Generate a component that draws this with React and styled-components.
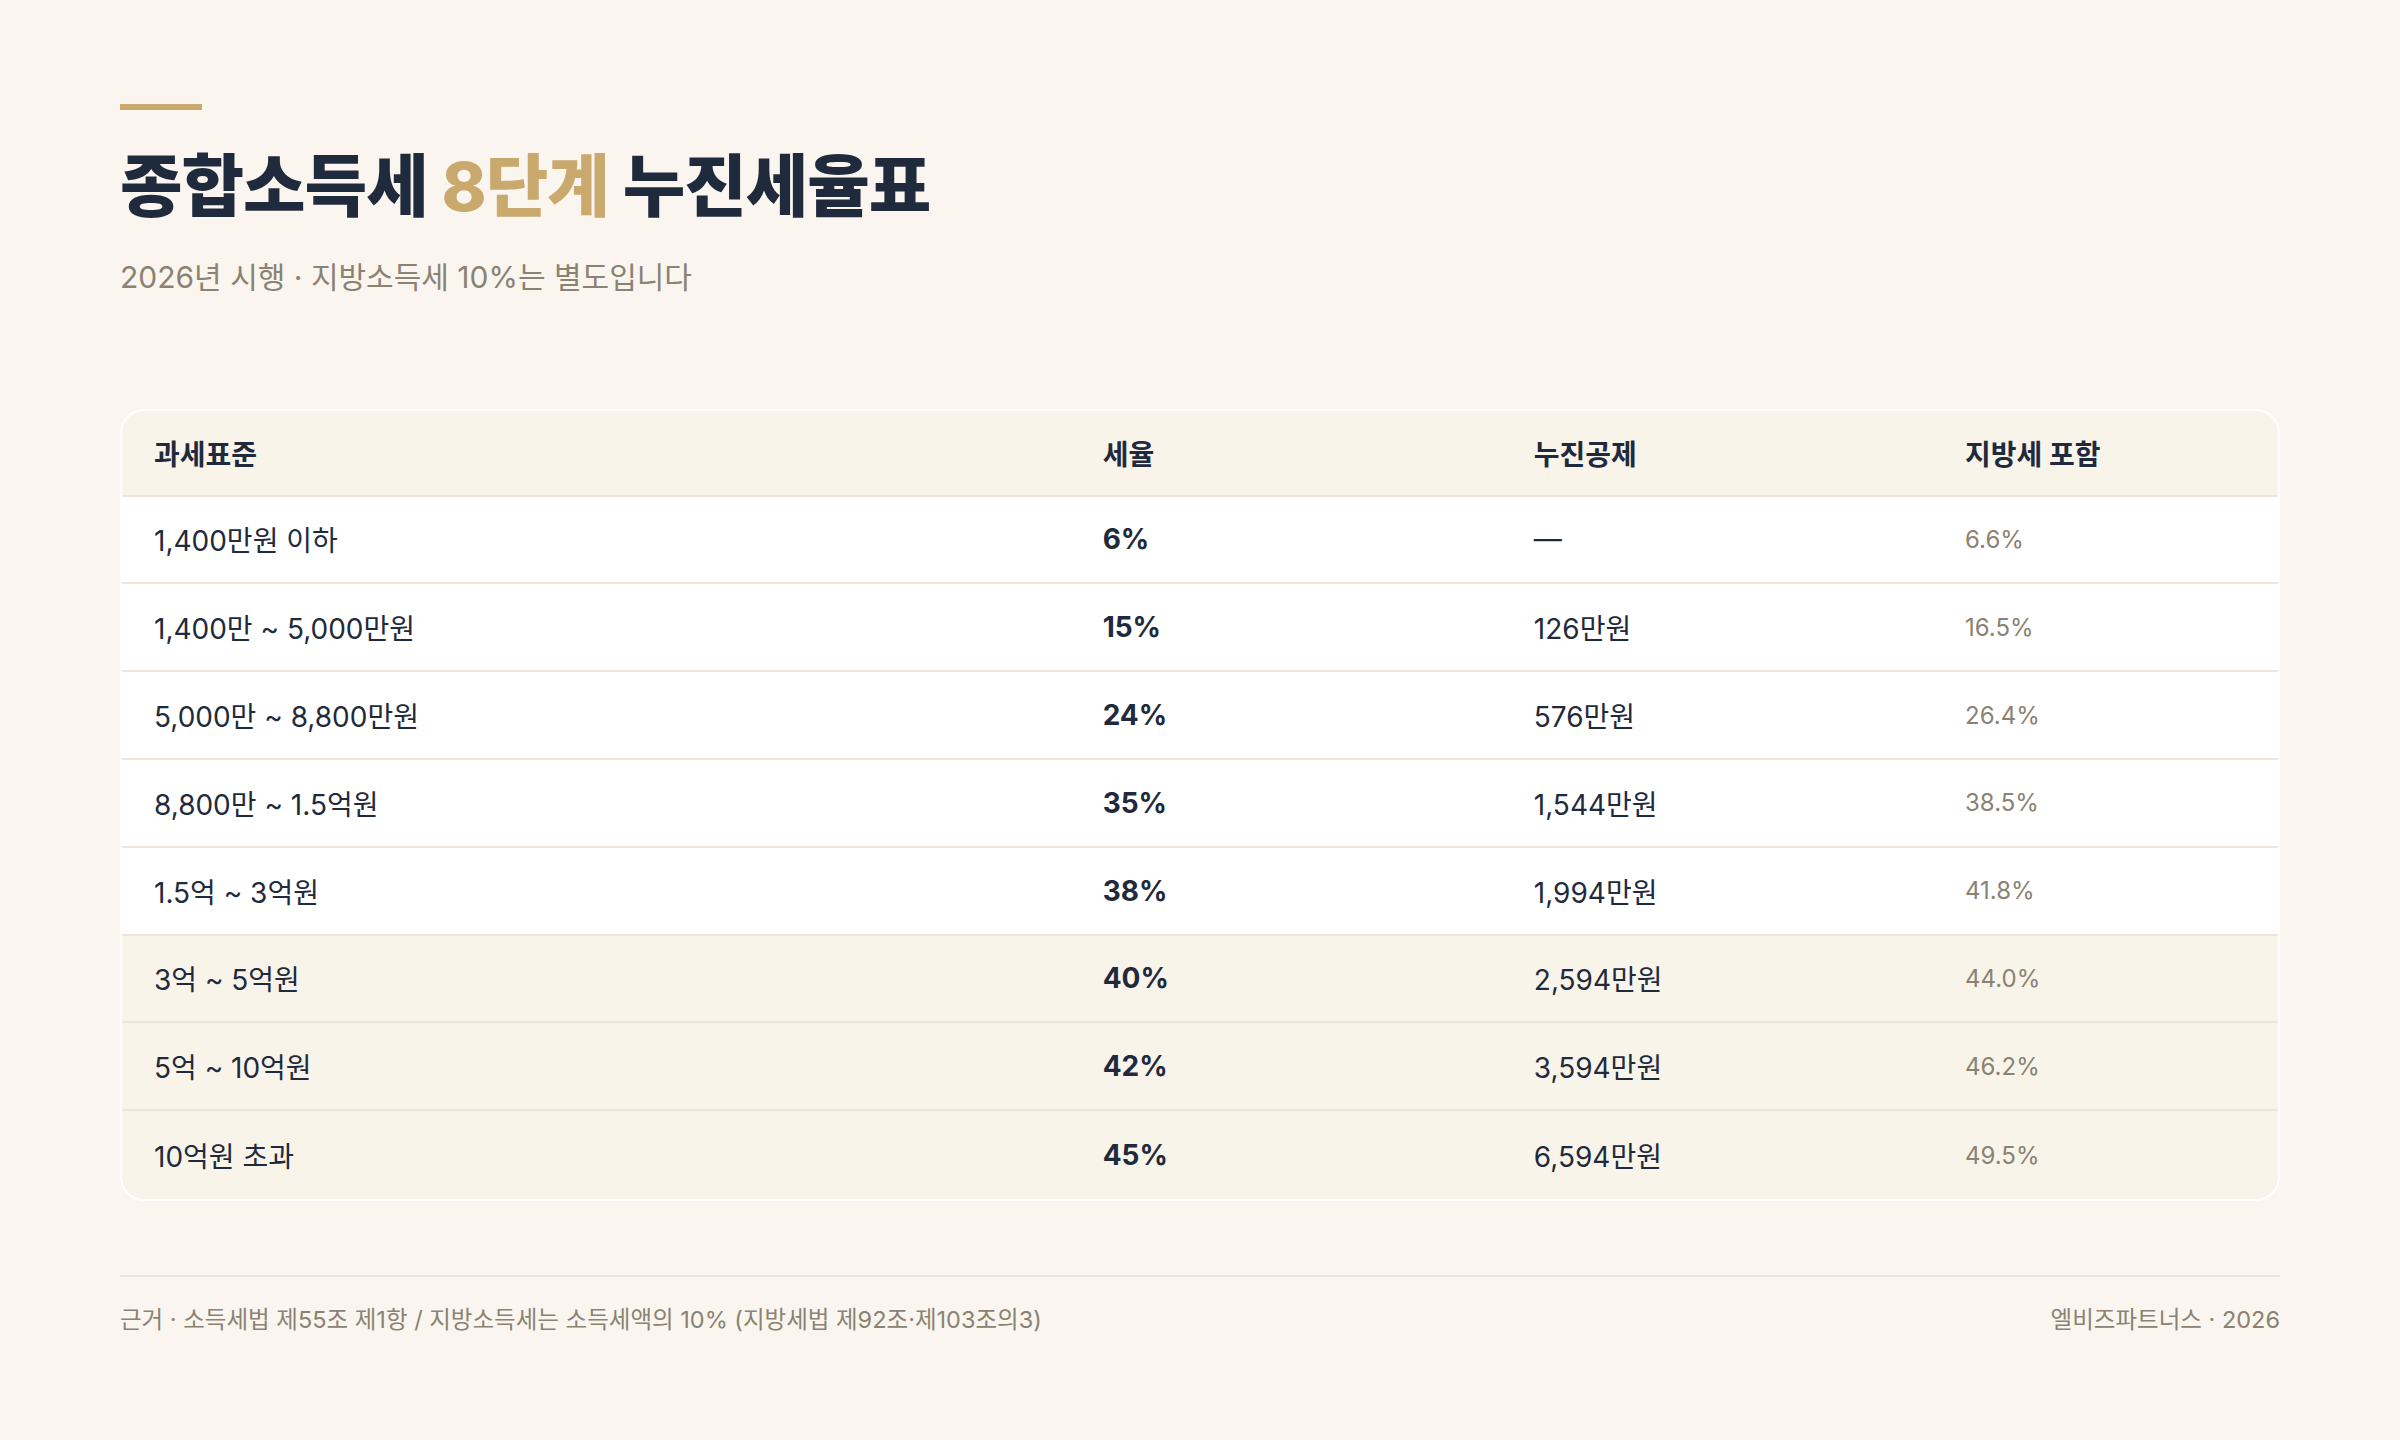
import styled, { createGlobalStyle } from "styled-components";

const GlobalStyle = createGlobalStyle`
  html, body {
    margin: 0;
    padding: 0;
    background: #faf6ef;
  }
  body {
    font-family: Inter, "Noto Sans CJK KR", sans-serif;
    color: #1f2a3c;
  }
`;

const Page = styled.div`
  width: 2400px;
  min-height: 1440px;
  box-sizing: border-box;
  padding: 104px 120px 0;
  display: flex;
  flex-direction: column;
`;

const AccentBar = styled.div`
  width: 82px;
  height: 6px;
  background: #c9a96e;
`;

const Title = styled.h1`
  margin: 36px 0 0;
  font-size: 68px;
  line-height: 1.2;
  font-weight: 800;
  letter-spacing: -0.015em;
  color: #1f2a3c;

  span {
    color: #c9a96e;
  }
`;

const Subtitle = styled.p`
  margin: 28px 0 0;
  font-size: 30px;
  line-height: 1.4;
  color: #8a8272;
`;

const Card = styled.div`
  margin-top: 111px;
  border: 2px solid #ffffff;
  border-radius: 24px;
  overflow: hidden;
  background: #ffffff;
`;

const Row = styled.div`
  display: grid;
  grid-template-columns: 44% 20% 20% 16%;
  align-items: center;
  box-sizing: border-box;
  height: ${(p) => (p.$head ? "86px" : "87.8px")};
  background: ${(p) => (p.$head || p.$tint ? "#f8f4ea" : "#ffffff")};
  border-bottom: 2px solid #ede5d8;

  &:last-child {
    border-bottom: none;
  }
`;

const Cell = styled.div`
  padding-left: 32px;
  font-size: ${(p) => (p.$muted ? "24px" : "28px")};
  font-weight: ${(p) => (p.$head || p.$strong ? 700 : 400)};
  color: ${(p) => (p.$muted ? "#8a8272" : "#1f2a3c")};
  white-space: nowrap;
`;

const Footer = styled.footer`
  margin-top: 74px;
  border-top: 2px solid #ebe4d8;
  padding-top: 27px;
  display: flex;
  justify-content: space-between;
  align-items: center;
  font-size: 23.5px;
  line-height: 1.4;
  color: #8a8272;
`;

const rows = [
  ["1,400만원 이하", "6%", "—", "6.6%"],
  ["1,400만 ~ 5,000만원", "15%", "126만원", "16.5%"],
  ["5,000만 ~ 8,800만원", "24%", "576만원", "26.4%"],
  ["8,800만 ~ 1.5억원", "35%", "1,544만원", "38.5%"],
  ["1.5억 ~ 3억원", "38%", "1,994만원", "41.8%"],
  ["3억 ~ 5억원", "40%", "2,594만원", "44.0%", true],
  ["5억 ~ 10억원", "42%", "3,594만원", "46.2%", true],
  ["10억원 초과", "45%", "6,594만원", "49.5%", true],
];

export default function App() {
  return (
    <>
      <GlobalStyle />
      <Page>
        <AccentBar />
        <Title>
          종합소득세 <span>8단계</span> 누진세율표
        </Title>
        <Subtitle>2026년 시행 · 지방소득세 10%는 별도입니다</Subtitle>

        <Card>
          <Row $head>
            <Cell $head>과세표준</Cell>
            <Cell $head>세율</Cell>
            <Cell $head>누진공제</Cell>
            <Cell $head>지방세 포함</Cell>
          </Row>
          {rows.map(([base, rate, deduct, local, tint]) => (
            <Row key={base} $tint={tint}>
              <Cell>{base}</Cell>
              <Cell $strong>{rate}</Cell>
              <Cell>{deduct}</Cell>
              <Cell $muted>{local}</Cell>
            </Row>
          ))}
        </Card>

        <Footer>
          <span>근거 · 소득세법 제55조 제1항 / 지방소득세는 소득세액의 10% (지방세법 제92조·제103조의3)</span>
          <span>엘비즈파트너스 · 2026</span>
        </Footer>
      </Page>
    </>
  );
}
